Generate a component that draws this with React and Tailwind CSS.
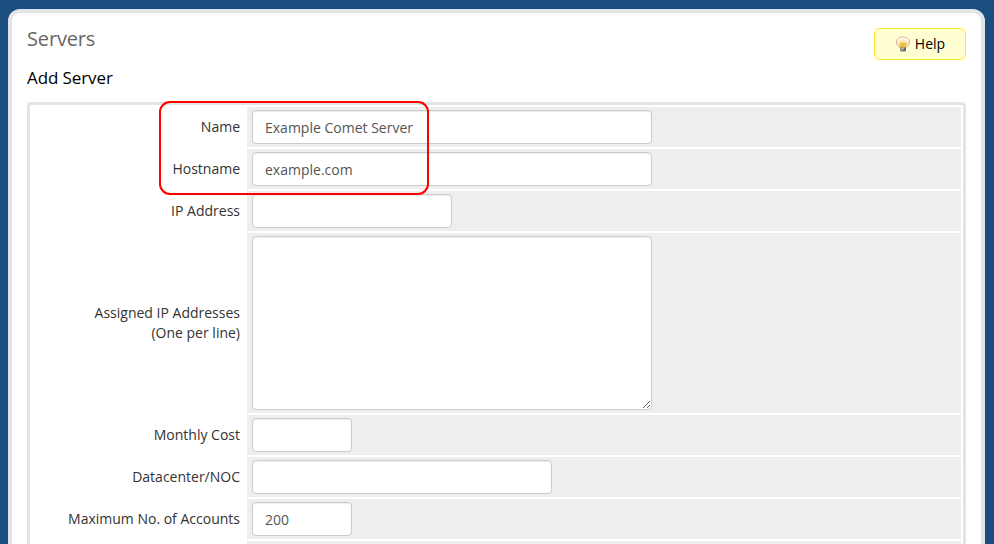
const box = 'block rounded-[4px] border border-[#cccccc] bg-white px-3 text-[14px] leading-5 text-[#555555] shadow-[inset_0_1px_1px_rgba(0,0,0,0.075)] outline-none';

function Row({ label, children }) {
  return (
    <div className="flex gap-[2px]">
      <div className="flex w-[213px] shrink-0 items-center justify-end pr-[5px] text-right">
        <span>{label}</span>
      </div>
      <div className="flex-1 bg-[#eeeeee] px-[5px] py-[3px]">{children}</div>
    </div>
  );
}

function Field({ width, value = '' }) {
  return <input className={`${box} ${width} h-[34px]`} defaultValue={value} />;
}

function Bulb() {
  return (
    <svg width="16" height="16" viewBox="0 0 16 16" fill="none">
      <defs>
        <radialGradient id="glass" cx="8" cy="9" r="7.5" gradientUnits="userSpaceOnUse">
          <stop stopColor="#f6c536" />
          <stop offset=".4" stopColor="#fbdf95" />
          <stop offset="1" stopColor="#fff3e0" />
        </radialGradient>
      </defs>
      <path d="M8 1C4 1 1.500 3.200 1.500 6c0 2.500 1.500 4 3.300 5.500h6.400C13 10 14.500 8.500 14.500 6 14.500 3.200 12 1 8 1Z" fill="url(#glass)" stroke="#d9aa8a" />
      <path d="M3 5.500C3.500 3 5.500 2.300 8 2.300s4.500.7 5 3.200" stroke="#fffdf5" strokeWidth="1.300" />
      <path d="M5 7h6v4.500H5Z" fill="#efc643" />
      <path d="M5.500 7v4M8 7.500V11M10.500 7v4" stroke="#dcae3a" strokeWidth=".7" />
      <path d="M5 11.500h6v3l-1.300 1H6.300L5 14.500Z" fill="#666666" />
      <path d="M5.500 12.300h3.500M5.500 13.800h3" stroke="#d5d5d5" strokeWidth=".8" />
    </svg>
  );
}

export default function App() {
  return (
    <div className="h-[544px] overflow-hidden bg-[#1a4d80] pr-[9px] pl-2 pt-[9px] font-['Open_Sans','Noto_Sans',sans-serif] text-[14px] leading-5 text-[#333333]">
      <main className="relative h-[600px] rounded-[12px] border-4 border-[#e0e6e8] bg-white px-[15px]">
        <header className="flex h-[89px] justify-between">
          <div>
            <h1 className="pt-[12px] text-[20px] leading-7 tracking-[-0.15px] text-[#666666]">Servers</h1>
            <h2 className="mt-[13px] text-[17px] leading-6 tracking-[-0.1px] text-black">Add Server</h2>
          </div>
          <button className="mt-[15px] flex h-8 w-[92px] items-center justify-center gap-1 rounded-[5px] border border-[#ffeb26] bg-[#ffffd2] text-black">
            <Bulb />
            Help
          </button>
        </header>
        <section className="flex flex-col gap-[2px] rounded-[4px] border-[3px] border-[#e0e6e8] p-[2px]">
          <Row label="Name"><Field width="w-[400px]" value="Example Comet Server" /></Row>
          <Row label="Hostname"><Field width="w-[400px]" value="example.com" /></Row>
          <Row label="IP Address"><Field width="w-[200px]" /></Row>
          <Row label={<>Assigned IP Addresses<br />(One per line)</>}>
            <textarea className={`${box} h-[174px] w-[400px] resize`} />
          </Row>
          <Row label="Monthly Cost"><Field width="w-[100px]" /></Row>
          <Row label="Datacenter/NOC"><Field width="w-[300px]" /></Row>
          <Row label="Maximum No. of Accounts"><Field width="w-[100px]" value="200" /></Row>
          <Row label=""><Field width="w-[400px]" /></Row>
        </section>
        <div className="pointer-events-none absolute left-[147px] top-[88px] h-[94px] w-[270px] rounded-[11px] border-2 border-[#ff0000]" />
      </main>
    </div>
  );
}
